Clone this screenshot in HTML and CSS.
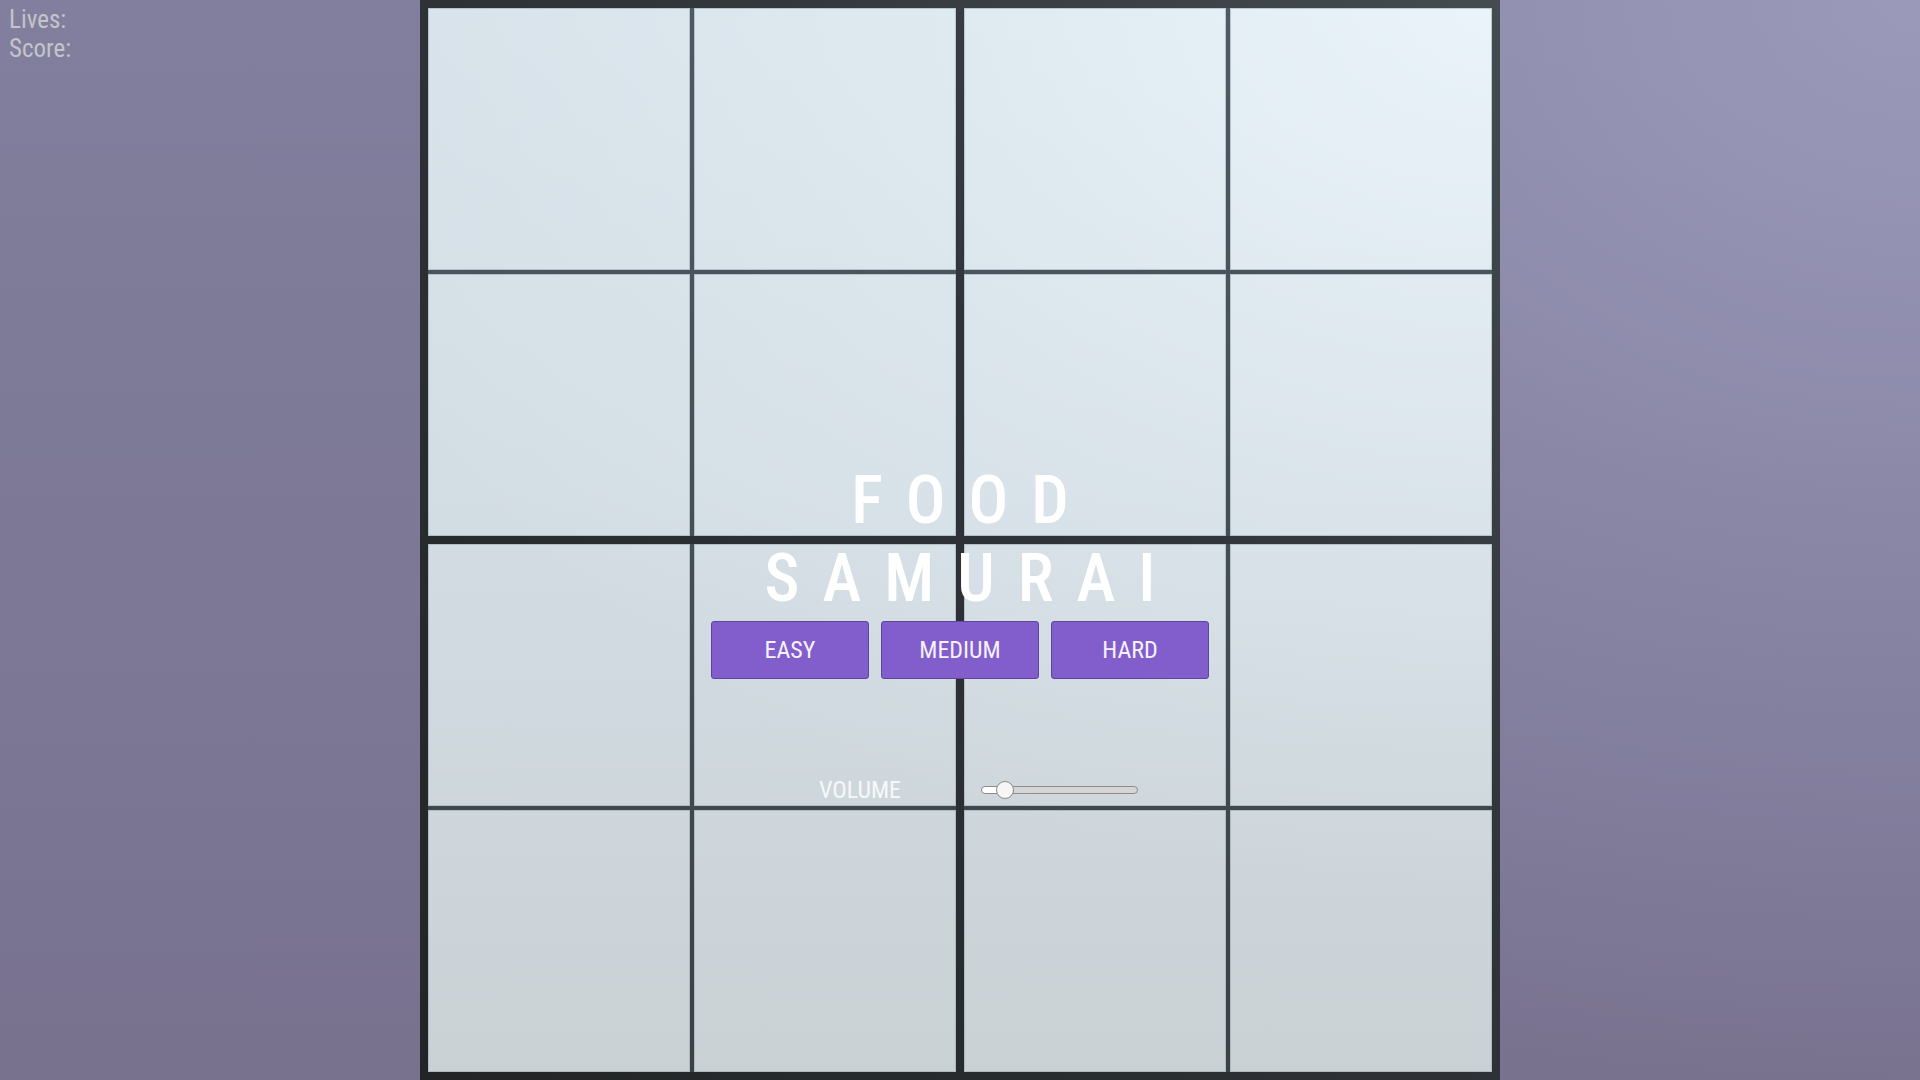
FILE: index.html
```html
<!DOCTYPE html>
<html lang="en">
<head>
<meta charset="utf-8">
<title>Food Samurai</title>
<link rel="stylesheet" href="styles.css">
</head>
<body>
<div class="page">
  <div class="hud">
    <div class="hud-line">Lives:</div>
    <div class="hud-line">Score:</div>
  </div>
  <div class="board">
    <div class="quad"><div class="cell"></div><div class="cell"></div><div class="cell"></div><div class="cell"></div></div>
    <div class="quad"><div class="cell"></div><div class="cell"></div><div class="cell"></div><div class="cell"></div></div>
    <div class="quad"><div class="cell"></div><div class="cell"></div><div class="cell"></div><div class="cell"></div></div>
    <div class="quad"><div class="cell"></div><div class="cell"></div><div class="cell"></div><div class="cell"></div></div>
    <div class="menu">
      <h1 class="title"><span class="title-line">FOOD</span><span class="title-line">SAMURAI</span></h1>
      <div class="levels">
        <button class="level">EASY</button>
        <button class="level">MEDIUM</button>
        <button class="level">HARD</button>
      </div>
      <div class="volume">
        <label class="volume-label" for="vol">VOLUME</label>
        <div class="volume-cell"><input id="vol" class="slider" type="range" min="0" max="100" value="10"></div>
      </div>
    </div>
  </div>
  <div class="side"></div>
</div>
</body>
</html>
```
FILE: styles.css
```css
html, body {
  margin: 0;
  padding: 0;
  height: 100%;
}
body {
  font-family: Roboto, "Noto Sans", sans-serif;
  font-stretch: 87.5%;
  background:
    radial-gradient(ellipse 1500px 1100px at 100% 0%, rgba(160, 158, 192, 0.85) 0%, rgba(160, 158, 192, 0.35) 50%, rgba(160, 158, 192, 0) 100%),
    linear-gradient(to bottom, #817f9d 0%, #7c7896 55%, #78728f 100%);
  overflow: hidden;
}
.page {
  display: grid;
  grid-template-columns: 1fr 1080px 1fr;
  height: 1080px;
}
.hud {
  padding: 5px 9px;
  color: #c4c4cb;
  font-size: 25px;
  line-height: 29px;
}
.board {
  position: relative;
  box-sizing: border-box;
  width: 1080px;
  height: 1080px;
  padding: 8px;
  display: grid;
  grid-template-columns: 528px 528px;
  grid-template-rows: 528px 528px;
  gap: 8px;
  background: linear-gradient(to bottom left, #444b51 0%, #30353a 40%, #222425 100%);
}
.quad {
  display: grid;
  grid-template-columns: 262px 262px;
  grid-template-rows: 262px 262px;
  gap: 4px;
  background: linear-gradient(to bottom, #4e5a63 0%, #444e55 50%, #3b4246 100%);
  background-attachment: fixed;
}
.cell {
  box-shadow: inset 0 0 0 1px rgba(150, 165, 176, 0.55);
  background:
    radial-gradient(ellipse 1250px 900px at 1500px 0px, rgba(240, 250, 255, 0.75) 0%, rgba(240, 250, 255, 0.25) 55%, rgba(240, 250, 255, 0) 100%),
    linear-gradient(to bottom, #d6e1e9 0%, #d3dde4 45%, #cad1d5 100%);
  background-attachment: fixed;
}
.menu {
  position: absolute;
  left: 0;
  right: 0;
  top: 462px;
  display: flex;
  flex-direction: column;
  align-items: center;
}
.title {
  margin: 0;
  display: flex;
  flex-direction: column;
  align-items: center;
  font-weight: 500;
  font-size: 66px;
  line-height: 78px;
  color: #ffffff;
  letter-spacing: 23px;
  padding-left: 23px;
}
.title-line {
  display: block;
}
.levels {
  display: flex;
  gap: 12px;
  margin-top: 3px;
}
.level {
  box-sizing: border-box;
  width: 158px;
  height: 58px;
  margin: 0;
  padding: 0;
  border: 1px solid #5b4699;
  border-radius: 3px;
  background: #825dcc;
  color: #f6f2ff;
  font-family: Roboto, "Noto Sans", sans-serif;
  font-stretch: 87.5%;
  font-size: 24px;
  cursor: pointer;
}
.volume {
  display: grid;
  grid-template-columns: 200px 200px;
  align-items: center;
  height: 30px;
  margin-top: 96px;
}
.volume-label {
  text-align: center;
  color: #f7f8fa;
  font-size: 24px;
  line-height: 30px;
}
.volume-cell {
  display: flex;
  align-items: center;
  height: 30px;
}
.slider {
  -webkit-appearance: none;
  appearance: none;
  box-sizing: border-box;
  margin: 0 0 0 21px;
  width: 157px;
  height: 8px;
  border: 1px solid #8c8c8c;
  border-radius: 4px;
  background: linear-gradient(to right, #ffffff 0px, #ffffff 22px, #d5d5d5 22px, #d5d5d5 100%);
  outline: none;
}
.slider::-webkit-slider-thumb {
  -webkit-appearance: none;
  appearance: none;
  width: 18px;
  height: 18px;
  border-radius: 50%;
  background: #f6f6f6;
  border: 1px solid #8a8a8a;
  box-sizing: border-box;
}
```
